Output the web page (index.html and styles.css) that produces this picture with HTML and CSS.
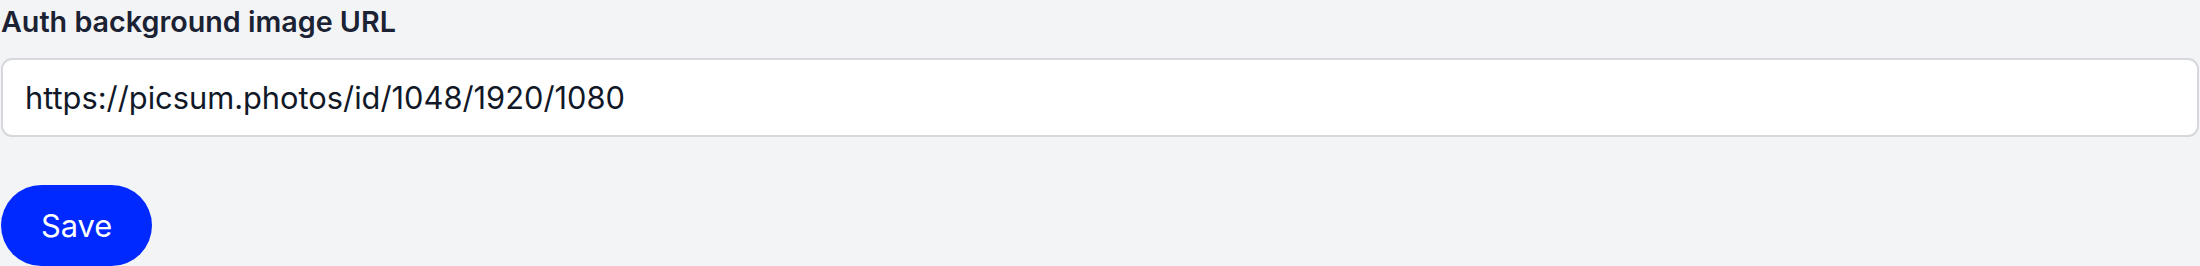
FILE: index.html
```html
<!DOCTYPE html>
<html lang="en">
<head>
<meta charset="utf-8">
<title>Auth background</title>
<link rel="stylesheet" href="styles.css">
</head>
<body>
<form class="settings-form">
  <label class="field-label" for="bg-url">Auth background image URL</label>
  <input class="text-input" id="bg-url" type="text" value="https://picsum.photos/id/1048/1920/1080">
  <div class="actions">
    <button class="btn-primary" type="button">Save</button>
  </div>
</form>
</body>
</html>
```
FILE: styles.css
```css
html, body {
  margin: 0;
  padding: 0;
  background: #f3f4f6;
}
body {
  font-family: Inter, "Liberation Sans", sans-serif;
  color: #111827;
}
.settings-form {
  display: flex;
  flex-direction: column;
  padding: 0 1px 0 1px;
}
.field-label {
  display: block;
  font-size: 28.7px;
  font-weight: 600;
  line-height: 44px;
  margin-bottom: 14px;
  color: #1a2233;
}
.text-input {
  box-sizing: border-box;
  width: 100%;
  height: 79px;
  border: 2px solid #d6d8dc;
  border-radius: 11px;
  background: #ffffff;
  padding: 0 22px;
  font-family: Inter, "Liberation Sans", sans-serif;
  font-size: 30.8px;
  color: #111827;
  outline: none;
}
.actions {
  display: flex;
  padding-top: 48px;
}
.btn-primary {
  height: 81px;
  padding: 0 40px;
  border: none;
  border-radius: 41px;
  background: #0029ff;
  color: #ffffff;
  font-family: Inter, "Liberation Sans", sans-serif;
  font-size: 30.8px;
  font-weight: 400;
  cursor: pointer;
}
```
